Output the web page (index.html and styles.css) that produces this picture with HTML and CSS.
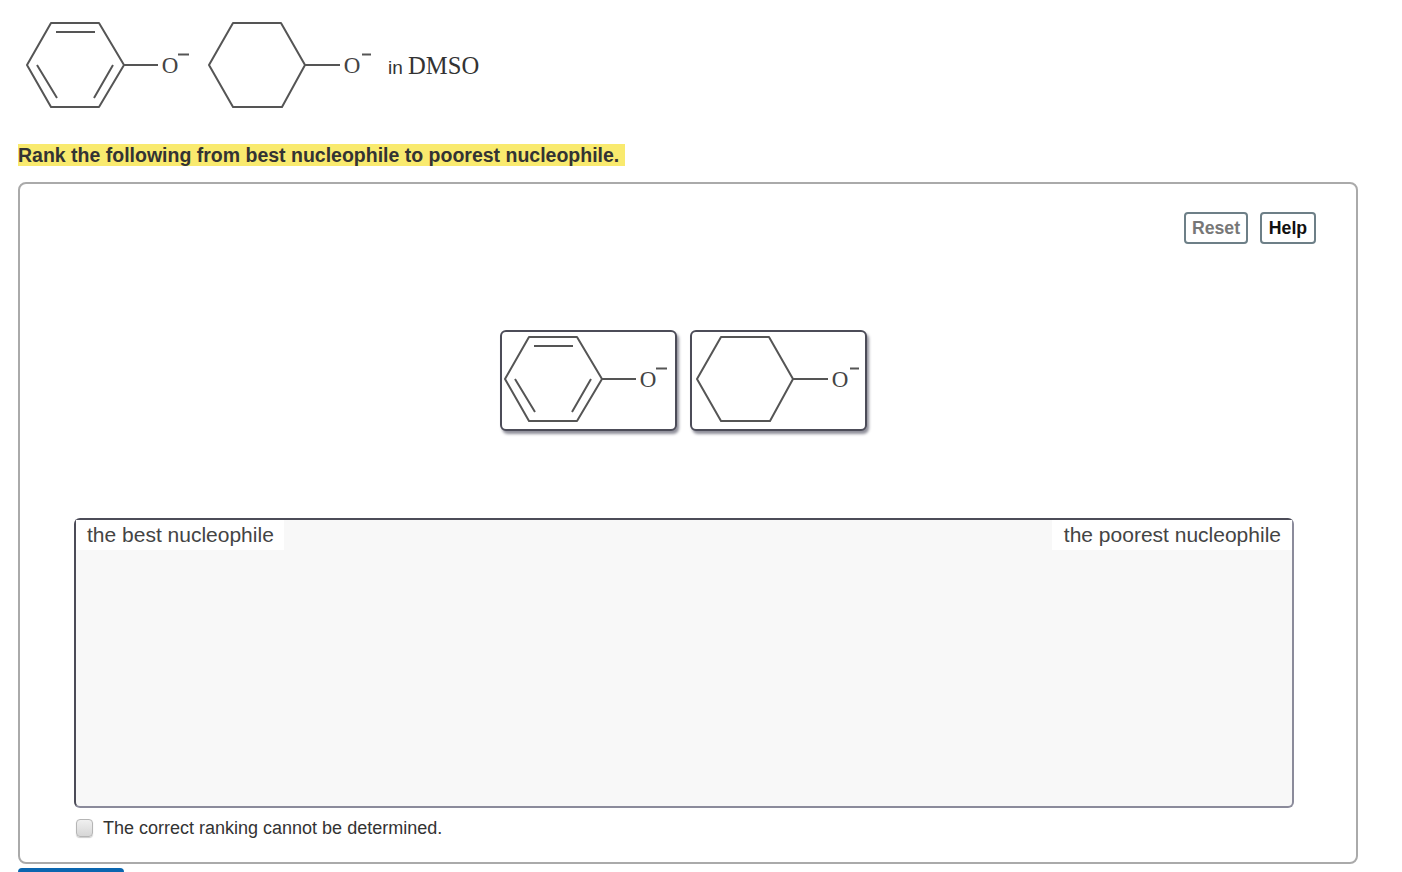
FILE: index.html
```html
<!DOCTYPE html>
<html lang="en">
  <head>
    <meta charset="utf-8" />
    <title>Rank the nucleophiles</title>
    <link rel="stylesheet" href="styles.css">
  </head>
  <body>
    <div class="intro">
      <svg class="molecule" viewBox="0 0 166 90">
        <path class="bond" d="M26 3H74L99 45L74 87H26L2 45Z M99 45H133" />
        <path class="bond" d="M31 12H70 M12 45L32 78 M88 45L69 78" />
        <text class="atom" x="145" y="53" text-anchor="middle">O</text>
        <path class="bond" d="M153 34.500H164" />
      </svg>
      <svg class="molecule" viewBox="0 0 166 90">
        <path class="bond" d="M26 3H74L98 45L75 87H26L2 45Z M98 45H133" />
        <text class="atom" x="145" y="53" text-anchor="middle">O</text>
        <path class="bond" d="M155 34.500H164" />
      </svg>
      <span class="solvent">in <span class="solvent-name">DMSO</span></span>
    </div>

    <p class="prompt"><span class="highlight">Rank the following from best nucleophile to poorest nucleophile.</span></p>

    <div class="panel">
      <div class="tools">
        <button class="tool tool-off" type="button">Reset</button>
        <button class="tool" type="button">Help</button>
      </div>

      <div class="cards">
        <div class="card">
          <svg class="molecule" viewBox="0 0 166 90">
            <path class="bond" d="M26 3H74L99 45L74 87H26L2 45Z M99 45H133" />
            <path class="bond" d="M31 12H70 M12 45L32 78 M88 45L69 78" />
            <text class="atom" x="145" y="53" text-anchor="middle">O</text>
            <path class="bond" d="M153 34.500H164" />
          </svg>
        </div>
        <div class="card">
          <svg class="molecule" viewBox="0 0 166 90">
            <path class="bond" d="M26 3H74L98 45L75 87H26L2 45Z M98 45H133" />
            <text class="atom" x="145" y="53" text-anchor="middle">O</text>
            <path class="bond" d="M155 34.500H164" />
          </svg>
        </div>
      </div>

      <div class="zone">
        <span class="zone-label">the best nucleophile</span>
        <span class="zone-label zone-label-right">the poorest nucleophile</span>
      </div>

      <label class="cannot">
        <input class="cannot-box" type="checkbox">
        <span>The correct ranking cannot be determined.</span>
      </label>
    </div>

    <div class="submit"></div>
  </body>
</html>
```

FILE: styles.css
```css
html, body {
  height: 872px;
  overflow: hidden;
}
body {
  margin: 0;
  padding: 0 44px 0 18px;
  box-sizing: border-box;
  background: #fff;
  color: #333;
  font-family: "Liberation Sans", Arial, sans-serif;
}
.bond {
  fill: none;
  stroke: #555;
  stroke-width: 2;
  stroke-linejoin: round;
}
.atom {
  font-family: "Liberation Serif", serif;
  font-size: 23px;
  fill: #444;
}
.molecule {
  display: block;
  flex: none;
  width: 166px;
  height: 90px;
}

.intro {
  display: flex;
  align-items: center;
  gap: 16px;
  height: 90px;
  padding: 20px 0 0 7px;
}
.solvent {
  margin: 2px 0 0 -1px;
  font-size: 19px;
}
.solvent-name {
  font-family: "Liberation Serif", serif;
  font-size: 24.600px;
}

.prompt {
  margin: 34px 0 16px;
  font-size: 19.500px;
  font-weight: bold;
  line-height: 22px;
}
.highlight {
  display: inline-block;
  padding-right: 6px;
  background: #f9ea6e;
}

.panel {
  box-sizing: border-box;
  height: 682px;
  padding: 28px 40px 0 54px;
  border: 2px solid #aaa;
  border-radius: 8px;
}
.tools {
  display: flex;
  justify-content: flex-end;
  gap: 12px;
}
.tool {
  width: 56px;
  height: 32px;
  padding: 0;
  border: 2px solid #6d7f87;
  border-radius: 4px;
  background: #fff;
  color: #111;
  font-family: inherit;
  font-size: 17.700px;
  font-weight: bold;
}
.tool-off {
  width: 64px;
  color: #777;
}

.cards {
  display: flex;
  justify-content: flex-start;
  gap: 13px;
  margin: 86px 0 87px 426px;
}
.card {
  box-sizing: border-box;
  width: 177px;
  height: 101px;
  padding: 2px 0 0 3px;
  border: 2px solid #4c4c58;
  border-radius: 6px;
  background: #fff;
  box-shadow: 2px 3px 3px #8f8f9a;
}
.card:first-child {
  padding-left: 1px;
}

.zone {
  display: flex;
  justify-content: space-between;
  align-items: flex-start;
  box-sizing: border-box;
  width: 1220px;
  height: 290px;
  border: 2px solid #8b8b9b;
  border-top-color: #4c4c58;
  border-left-color: #4c4c58;
  border-radius: 6px;
  background: #f8f8f8;
}
.zone-label {
  height: 30px;
  padding: 0 10px 0 11px;
  background: #fff;
  color: #444;
  font-size: 21px;
  line-height: 30px;
}
.zone-label-right {
  padding: 0 11px 0 12px;
}

.cannot {
  display: flex;
  align-items: center;
  gap: 10px;
  margin: 10px 0 0 2px;
  font-size: 18px;
  line-height: 20px;
}
.cannot-box {
  appearance: none;
  flex: none;
  box-sizing: border-box;
  width: 17px;
  height: 18px;
  margin: 0;
  border: 1px solid #b5b5b5;
  border-radius: 4px;
  background: linear-gradient(#f0f0f0, #d6d6d6);
  box-shadow: 0 1px 1px #ccc;
}

.submit {
  width: 106px;
  height: 6px;
  margin-top: 4px;
  border-radius: 4px 4px 0 0;
  background: #0a66b0;
}
```
